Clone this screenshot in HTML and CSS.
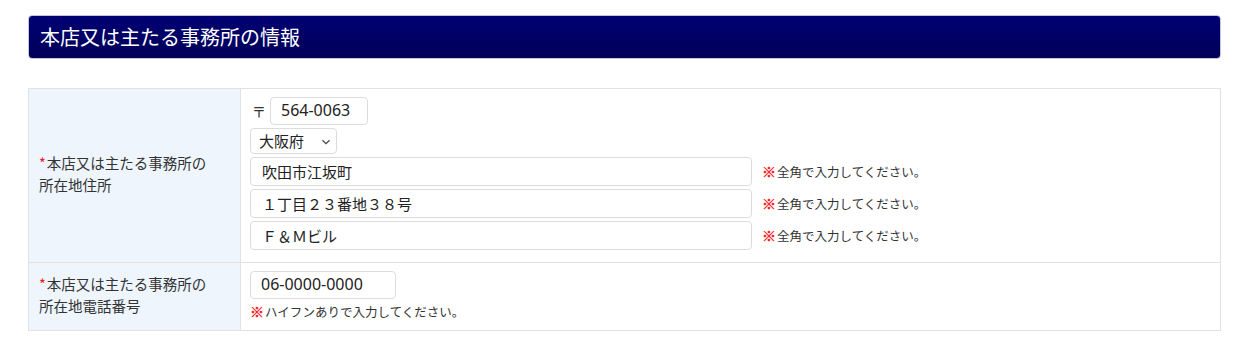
FILE: index.html
```html
<!DOCTYPE html>
<html lang="ja">
<head>
<meta charset="utf-8">
<link rel="stylesheet" href="styles.css">
</head>
<body>
<div class="page">
  <h2 class="section-title">本店又は主たる事務所の情報</h2>
  <table class="form-table">
    <tr class="row1">
      <th class="label"><div class="label-text"><span class="req">*</span>本店又は主たる事務所の<br>所在地住所</div></th>
      <td class="field">
        <div class="line"><span class="zip-mark">〒</span><span class="input zip">564-0063</span></div>
        <div class="line"><span class="select">大阪府<svg class="chev" width="10" height="6" viewBox="0 0 10 6"><path d="M1.5 1.2 L5 4.6 L8.5 1.2" fill="none" stroke="#444" stroke-width="1.2"/></svg></span></div>
        <div class="line"><span class="input wide">吹田市江坂町</span><span class="note"><span class="kome">※</span>全角で入力してください。</span></div>
        <div class="line"><span class="input wide">１丁目２３番地３８号</span><span class="note"><span class="kome">※</span>全角で入力してください。</span></div>
        <div class="line"><span class="input wide">Ｆ＆Ｍビル</span><span class="note"><span class="kome">※</span>全角で入力してください。</span></div>
      </td>
    </tr>
    <tr class="row2">
      <th class="label"><div class="label-text"><span class="req">*</span>本店又は主たる事務所の<br>所在地電話番号</div></th>
      <td class="field field2">
        <div class="line"><span class="input tel">06-0000-0000</span></div>
        <div class="note2"><span class="kome">※</span>ハイフンありで入力してください。</div>
      </td>
    </tr>
  </table>
</div>
</body>
</html>
```
FILE: styles.css
```css
* { box-sizing: border-box; }
html, body { margin: 0; padding: 0; background: #fff; }
body {
  font-family: "Noto Sans", "Noto Sans CJK JP", sans-serif;
  color: #333;
}
.page { padding: 15px 29px 0 28px; }
.section-title {
  margin: 0;
  height: 44px;
  background: linear-gradient(#000074, #000058);
  color: #fff;
  font-size: 20px;
  font-weight: normal;
  line-height: 42px;
  padding-left: 11px;
  border-radius: 4px;
  border: 1px solid #c4c4dc;
  font-family: "Noto Sans CJK JP", sans-serif;
}
.form-table {
  margin-top: 29px;
  width: 100%;
  border-collapse: collapse;
}
.form-table th, .form-table td {
  border: 1px solid #e2e2e2;
  vertical-align: middle;
}
.row1 { height: 174px; }
.row2 { height: 65px; }
.label {
  width: 212px;
  background: #eef5fd;
  text-align: left;
  font-weight: normal;
  font-size: 14.5px;
  line-height: 22px;
  padding: 0 0 3px 10px;
  color: #333;
  font-family: "Noto Sans CJK JP", sans-serif;
}
.req { color: #e8201a; margin-right: 1px; }
.field { padding: 8px 0 12px 9px; line-height: 1.2; }
.field2 { padding-top: 8px; padding-bottom: 8px; }
.line {
  display: flex;
  align-items: center;
  margin-bottom: 3px;
}
.line:last-child { margin-bottom: 0; }
.zip-mark { font-size: 14px; width: 20px; padding-left: 2px; font-family: "Noto Sans CJK JP", sans-serif; }
.input {
  display: flex;
  align-items: center;
  height: 29px;
  border: 1px solid #dcdcdc;
  border-radius: 4px;
  padding-left: 11px;
  font-size: 15px;
  color: #222;
  background: #fff;
}
.zip { width: 98px; height: 28px; padding-left: 10px; font-size: 16px; }
.wide { width: 502px; }
.tel { width: 146px; height: 28px; padding-left: 10px; font-size: 16px; }
.select {
  display: flex;
  align-items: center;
  justify-content: space-between;
  width: 87px;
  height: 26px;
  border: 1px solid #dcdcdc;
  border-radius: 4px;
  padding: 0 5px 0 8px;
  font-size: 15px;
  color: #222;
}
.chev { margin-top: 2px; }
.note {
  margin-left: 10px;
  font-size: 12.5px;
  color: #333;
}
.kome {
  color: #ff0a14;
  margin-right: 1px;
  font-size: 14px;
  font-weight: 900;
  font-family: "Noto Sans CJK JP", sans-serif;
  -webkit-text-stroke: 0.4px #ff0a14;
}
.note2 {
  font-size: 12.5px;
  margin-top: 3px;
  line-height: 18px;
}
```
